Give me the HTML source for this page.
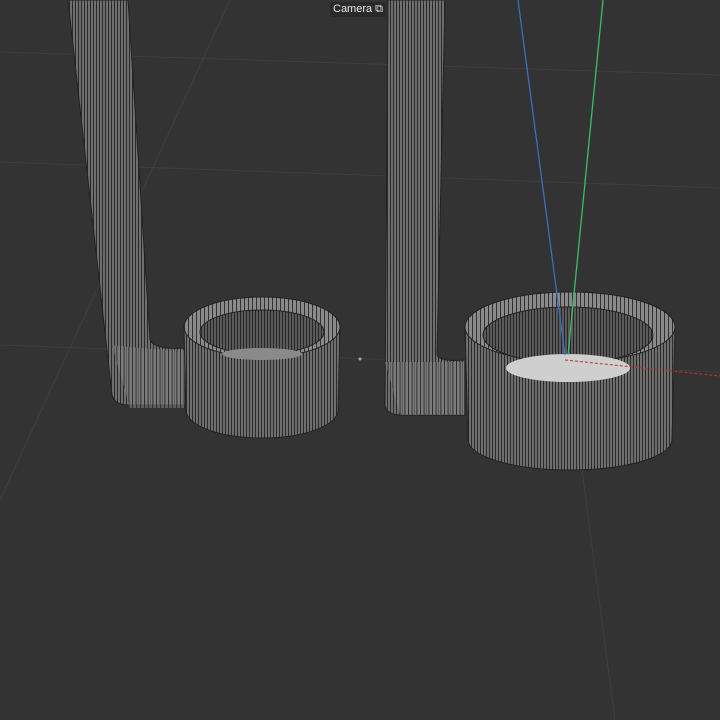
<!DOCTYPE html>
<html><head><style>
html,body{margin:0;padding:0;background:#333333;width:720px;height:720px;overflow:hidden}
.cam{position:absolute;left:330px;top:2px;font:11px "Liberation Sans",sans-serif;color:#e8e8e8;background:#2a2a2a;padding:1px 3px;border-radius:2px}
</style></head><body>
<svg width="720" height="720" style="position:absolute;left:0;top:0">
<defs>
<pattern id="h" width="3" height="10" patternUnits="userSpaceOnUse"><rect width="3" height="10" fill="#6e6e6e"/><rect width="1" height="10" fill="#2a2a2a"/></pattern>
<pattern id="h2" width="4" height="10" patternUnits="userSpaceOnUse"><rect width="4" height="10" fill="#8a8a8a"/><rect width="1" height="10" fill="#303030"/></pattern>
<pattern id="h3" width="3" height="10" patternUnits="userSpaceOnUse"><rect width="3" height="10" fill="#5a5a5a"/><rect width="1" height="10" fill="#262626"/></pattern>
</defs>
<rect width="720" height="720" fill="#333"/>
<g stroke="#3e3e3e" stroke-width="1" fill="none">
<path d="M0 52 L720 75"/><path d="M0 162 L720 188"/><path d="M0 345 L720 372"/>
<path d="M0 500 L230 0"/>
<path d="M578 440 L615 720"/>
</g>
<!-- left pole -->
<path d="M68 0 L128 0 L150 340 Q155 350 185 348 L185 405 L128 405 Q115 405 112 395 Z" fill="url(#h)" stroke="#222"/>
<path d="M112 345 Q150 350 185 350 L185 408 L130 408" fill="url(#h2)" opacity=".5"/>
<!-- right pole -->
<path d="M388 0 L445 0 L437 355 Q440 362 465 360 L465 415 L400 415 Q386 414 385 405 Z" fill="url(#h)" stroke="#222"/>
<path d="M385 362 Q420 362 465 362 L465 415 L400 415" fill="url(#h2)" opacity=".5"/>
<!-- left cup -->
<path d="M184 327 L186 410 A76 28 0 0 0 338 410 L340 327 Z" fill="url(#h)" stroke="#222"/>
<ellipse cx="262" cy="327" rx="78" ry="30" fill="url(#h2)" stroke="#222"/>
<ellipse cx="262" cy="332" rx="62" ry="22" fill="url(#h3)" stroke="#222"/>
<ellipse cx="262" cy="354" rx="40" ry="6" fill="#8a8a8a"/>
<!-- right cup -->
<path d="M465 327 L468 440 A102 30 0 0 0 672 440 L675 327 Z" fill="url(#h)" stroke="#222"/>
<ellipse cx="570" cy="327" rx="105" ry="35" fill="url(#h2)" stroke="#222"/>
<ellipse cx="568" cy="335" rx="85" ry="28" fill="url(#h3)" stroke="#222"/>
<ellipse cx="568" cy="368" rx="62" ry="14" fill="#cfcfcf"/>
<!-- axes -->
<path d="M518 0 L565 355" stroke="#3a6fc0" stroke-width="1.3"/>
<path d="M603 0 L568 355" stroke="#3dbb6a" stroke-width="1.3"/>
<path d="M565 360 L720 376" stroke="#c03030" stroke-width="1" stroke-dasharray="3 2"/>
<circle cx="360" cy="359" r="1.5" fill="#aaa"/>
</svg>
<div class="cam">Camera ⧉</div>
</body></html>
